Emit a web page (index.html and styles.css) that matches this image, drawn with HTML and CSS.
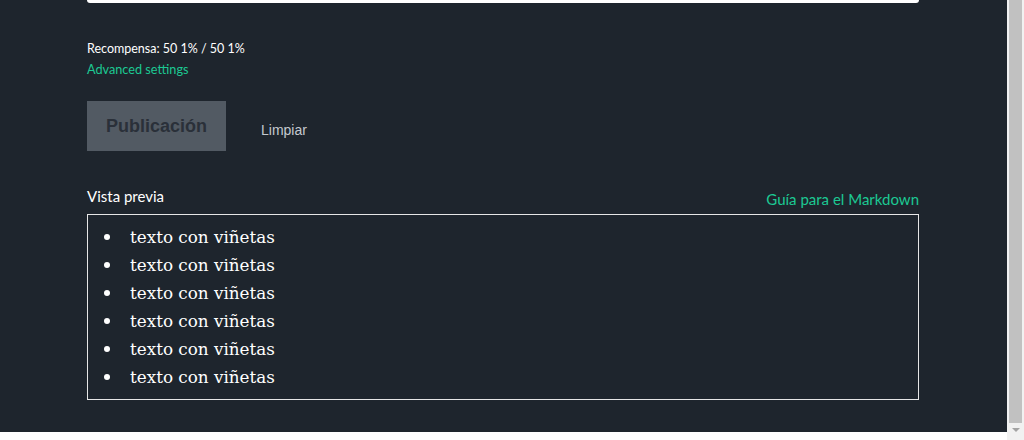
FILE: index.html
```html
<!DOCTYPE html>
<html>
<head>
    <meta charset="UTF-8">
    <title>Publicación</title>
    <link rel="stylesheet" href="styles.css">
</head>
<body>
    <div class="window">
        <div class="page">
            <div class="editor">
                <div class="textarea"></div>

                <div class="reward">Recompensa: 50 1% / 50 1%</div>
                <a class="advanced" href="javascript:;">Advanced settings</a>

                <div class="actions">
                    <button class="btn-post" disabled>Publicación</button>
                    <button class="btn-clear">Limpiar</button>
                </div>

                <div class="preview-head">
                    <span class="preview-title">Vista previa</span>
                    <a class="guide" href="javascript:;">Guía para el Markdown</a>
                </div>
                <div class="preview">
                    <ul>
                        <li>texto con viñetas</li>
                        <li>texto con viñetas</li>
                        <li>texto con viñetas</li>
                        <li>texto con viñetas</li>
                        <li>texto con viñetas</li>
                        <li>texto con viñetas</li>
                    </ul>
                </div>
            </div>
        </div>
        <div class="scrollbar">
            <div class="thumb"></div>
            <div class="arrow"></div>
        </div>
    </div>
</body>
</html>
```

FILE: styles.css
```css
* {
    margin: 0;
    padding: 0;
    box-sizing: border-box;
}

body {
    background-color: #fff;
    font-family: "Lato", "Noto Sans", sans-serif;
}

.window {
    display: flex;
    height: 440px;
    overflow: hidden;
}

.page {
    width: 1007px;
    height: 432px;
    background-color: #1e252d;
}

.editor {
    width: 832px;
    margin-left: 87px;
}

.textarea {
    height: 3px;
    background-color: #fff;
    border-radius: 0 0 3px 3px;
}

.reward {
    margin-top: 37px;
    font-size: 12.5px;
    line-height: 18px;
    color: #fff;
}

.advanced {
    display: block;
    margin-top: 2px;
    font-size: 12.7px;
    line-height: 18px;
    color: #1cc993;
    text-decoration: none;
}

.actions {
    display: flex;
    align-items: center;
    margin-top: 23px;
}

.btn-post {
    width: 139px;
    height: 50px;
    border: none;
    background-color: #525a63;
    color: #2a3039;
    font-family: "Liberation Sans", Arial, sans-serif;
    font-weight: bold;
    font-size: 18px;
}

.btn-clear {
    margin-left: 35px;
    border: none;
    background: none;
    color: #c4c9cf;
    font-family: "Liberation Sans", Arial, sans-serif;
    font-size: 14px;
    margin-top: 8px;
}

.preview-head {
    display: flex;
    justify-content: space-between;
    align-items: flex-end;
    margin-top: 35px;
    height: 28px;
    padding-bottom: 5px;
}

.preview-title {
    font-size: 15px;
    color: #fff;
    line-height: 20px;
    margin-bottom: 3px;
}

.guide {
    font-size: 15px;
    color: #1cc993;
    text-decoration: none;
    line-height: 20px;
}

.preview {
    height: 186px;
    border: 1px solid #e6e6e6;
    padding: 8px 0 0 0;
}

.preview ul {
    list-style: none;
    color: #fff;
    font-family: "DejaVu Serif", Georgia, serif;
    font-size: 16.8px;
    line-height: 28px;
}

.preview li {
    display: flex;
    align-items: center;
    padding-left: 16px;
}

.preview li::before {
    content: "";
    width: 6px;
    height: 6px;
    border-radius: 50%;
    background-color: #fff;
    margin-right: 20px;
}

.scrollbar {
    width: 17px;
    height: 440px;
    background-color: #f1f1f1;
    display: flex;
    flex-direction: column;
}

.thumb {
    height: 423px;
    margin: 0 2px;
    background-color: #c1c1c1;
}

.arrow {
    width: 0;
    height: 0;
    margin: 5px auto 0;
    border-left: 4px solid transparent;
    border-right: 4px solid transparent;
    border-top: 4px solid #a3a3a3;
}
```
